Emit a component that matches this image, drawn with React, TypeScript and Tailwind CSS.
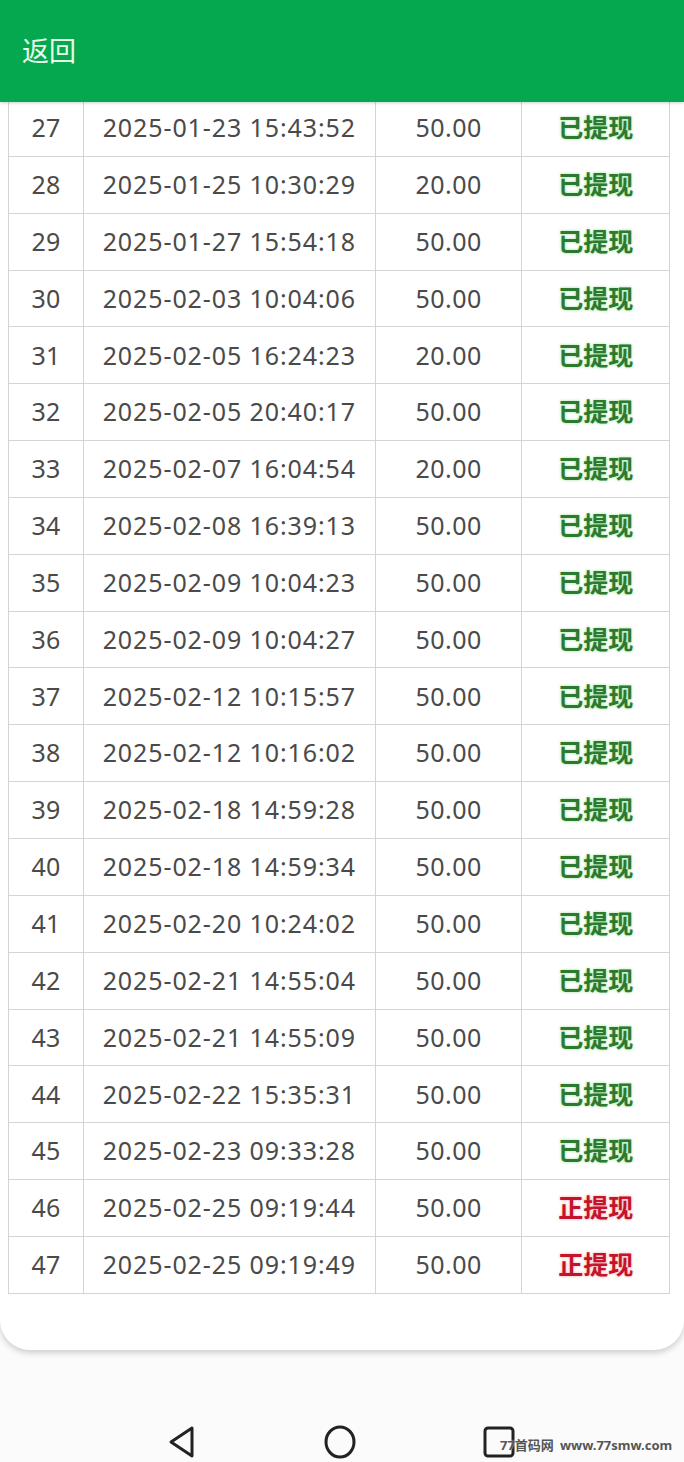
const rows: [number, string, string, boolean][] = [
  [27, "2025-01-23 15:43:52", "50.00", true],
  [28, "2025-01-25 10:30:29", "20.00", true],
  [29, "2025-01-27 15:54:18", "50.00", true],
  [30, "2025-02-03 10:04:06", "50.00", true],
  [31, "2025-02-05 16:24:23", "20.00", true],
  [32, "2025-02-05 20:40:17", "50.00", true],
  [33, "2025-02-07 16:04:54", "20.00", true],
  [34, "2025-02-08 16:39:13", "50.00", true],
  [35, "2025-02-09 10:04:23", "50.00", true],
  [36, "2025-02-09 10:04:27", "50.00", true],
  [37, "2025-02-12 10:15:57", "50.00", true],
  [38, "2025-02-12 10:16:02", "50.00", true],
  [39, "2025-02-18 14:59:28", "50.00", true],
  [40, "2025-02-18 14:59:34", "50.00", true],
  [41, "2025-02-20 10:24:02", "50.00", true],
  [42, "2025-02-21 14:55:04", "50.00", true],
  [43, "2025-02-21 14:55:09", "50.00", true],
  [44, "2025-02-22 15:35:31", "50.00", true],
  [45, "2025-02-23 09:33:28", "50.00", true],
  [46, "2025-02-25 09:19:44", "50.00", false],
  [47, "2025-02-25 09:19:49", "50.00", false],
];

function Row({ no, time, amount, done }: { no: number; time: string; amount: string; done: boolean }) {
  return (
    <div className="flex h-[56.85px] border-b border-[#d4d4d4] text-[25px] text-[#4a4a4a]">
      <div className="flex w-[75px] items-center justify-center border-r border-[#d4d4d4]">{no}</div>
      <div className="flex w-[293px] items-center justify-center border-r border-[#d4d4d4] tracking-[0.9px]">{time}</div>
      <div className="flex w-[147px] items-center justify-center border-r border-[#d4d4d4] tracking-[0.5px]">{amount}</div>
      <div
        className={`flex w-[147px] items-center justify-center font-bold ${
          done ? "text-[#2b7a2f] [text-shadow:0_0_3px_rgba(80,200,80,0.6)]" : "text-[#c4142c] [text-shadow:0_0_3px_rgba(240,80,90,0.5)]"
        }`}
      >
        {done ? "已提现" : "正提现"}
      </div>
    </div>
  );
}

export default function App() {
  return (
    <div
      className="relative h-[1462px] w-[684px] overflow-hidden bg-[#fbfbfb]"
      style={{ fontFamily: '"Noto Sans", Roboto, "Noto Sans CJK SC", sans-serif' }}
    >
      <div className="relative z-10 flex h-[102px] items-center bg-[#05a84f] pl-[22px] shadow-[0_1px_3px_rgba(0,0,0,0.2)]">
        <span className="text-[27px] text-[#e8fbe9]">返回</span>
      </div>

      <div className="-mt-[2px] h-[1250px] rounded-b-[30px] bg-white shadow-[0_3px_6px_rgba(0,0,0,0.18)]">
        <div className="ml-[8px] w-[662px] border-x border-[#d4d4d4]">
          {rows.map(([no, time, amount, done]) => (
            <Row key={no} no={no} time={time} amount={amount} done={done} />
          ))}
        </div>
      </div>

      <div className="mt-[75px] flex items-center justify-center gap-[125px] pr-[2px]">
        <svg width="32" height="34" viewBox="0 0 32 34" fill="none" stroke="#222" strokeWidth="3" strokeLinejoin="round">
          <path d="M26 3 L5 17 L26 31 Z" />
        </svg>
        <svg width="34" height="34" viewBox="0 0 34 34" fill="none" stroke="#222" strokeWidth="3">
          <ellipse cx="17" cy="17" rx="14" ry="15" />
        </svg>
        <svg width="34" height="34" viewBox="0 0 34 34" fill="none" stroke="#222" strokeWidth="3">
          <rect x="3" y="3" width="28" height="28" rx="3" />
        </svg>
      </div>

      <div className="absolute left-[500px] top-[1436px] whitespace-nowrap text-[13px] font-bold text-[#555] [text-shadow:0_0_2px_#fff]">
        77首码网<span className="ml-[6px]">www.77smw.com</span>
      </div>
    </div>
  );
}
